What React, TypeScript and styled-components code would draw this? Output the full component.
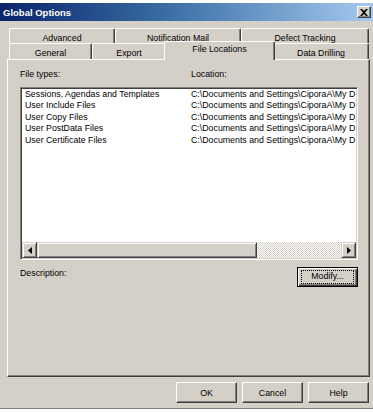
import styled, { createGlobalStyle } from 'styled-components'

const GlobalStyle = createGlobalStyle`
  body {
    margin: 0;
    background: #ffffff;
    font-family: "Liberation Sans", Arial, sans-serif;
    font-size: 8.8px;
    color: #000;
  }
`

const FACE = '#d4d0c8'
const SHADOW = '#808080'
const DARK = '#404040'

const Window = styled.div`
  width: 373px;
  height: 406px;
  margin-top: 3px;
  background: ${FACE};
  border-bottom: 1px solid ${SHADOW};
  box-sizing: border-box;
  display: flex;
  flex-direction: column;
`

const TitleBar = styled.div`
  height: 18px;
  display: flex;
  align-items: center;
  justify-content: space-between;
  padding: 0 2px 0 3px;
  background: linear-gradient(to right, #0a246a 0%, #3a6ea5 45%, #a6caf0 100%);
`

const TitleText = styled.span`
  color: #fff;
  font-weight: bold;
  font-size: 9.5px;
`

const CloseButton = styled.div`
  width: 14px;
  height: 12px;
  box-sizing: border-box;
  background: ${FACE};
  border: 1px solid;
  border-color: #fff ${DARK} ${DARK} #fff;
  box-shadow: inset -1px -1px 0 ${SHADOW};
  display: flex;
  align-items: center;
  justify-content: center;
`

const Body = styled.div`
  flex: 1;
  display: flex;
  flex-direction: column;
  padding: 7px 3px 0 7px;
`

const TabStrip = styled.div`
  display: flex;
  flex-direction: column;
  margin-left: 2px;
  width: 360px;
`

const TabRow = styled.div<{ $h: number }>`
  display: flex;
  height: ${(p) => p.$h}px;
  position: relative;
`

const Tab = styled.div<{ $w: number; $active?: boolean }>`
  width: ${(p) => p.$w}px;
  box-sizing: border-box;
  border-top: 1px solid #fff;
  border-left: 1px solid #fff;
  border-right: 1px solid ${DARK};
  border-radius: 2px 2px 0 0;
  box-shadow: inset -1px 0 0 ${SHADOW};
  background: ${FACE};
  display: flex;
  justify-content: center;
  padding-top: 4px;
  line-height: 10px;
  ${(p) =>
    p.$active &&
    `
    margin: -2px -2px -1px -2px;
    width: ${p.$w + 4}px;
    z-index: 2;
    padding-top: 2px;
  `}
`

const Panel = styled.div`
  height: 318px;
  box-sizing: border-box;
  border: 1px solid;
  border-color: #fff ${DARK} ${DARK} #fff;
  box-shadow: inset -1px -1px 0 ${SHADOW};
  padding: 9px 11px 0 12px;
  display: flex;
  flex-direction: column;
`

const LabelRow = styled.div`
  display: grid;
  grid-template-columns: 171px 1fr;
  height: 11px;
  line-height: 11px;
`

const ListBox = styled.div`
  margin-top: 7px;
  height: 173px;
  box-sizing: border-box;
  background: #fff;
  border: 1px solid;
  border-color: ${SHADOW} #fff #fff ${SHADOW};
  box-shadow: inset 1px 1px 0 ${DARK}, inset -1px -1px 0 ${FACE};
  padding: 1px;
  display: flex;
  flex-direction: column;
  width: 338px;
`

const ListRows = styled.div`
  flex: 1;
  padding-top: 0;
`

const ListRow = styled.div`
  display: grid;
  grid-template-columns: 166px 1fr;
  height: 11.4px;
  line-height: 11.4px;
  padding-left: 3px;
  white-space: nowrap;
`

const ScrollBar = styled.div`
  height: 16px;
  display: flex;
`

const ScrollArrow = styled.div`
  width: 15px;
  height: 16px;
  box-sizing: border-box;
  background: ${FACE};
  border: 1px solid;
  border-color: ${FACE} ${DARK} ${DARK} ${FACE};
  box-shadow: inset 1px 1px 0 #fff, inset -1px -1px 0 ${SHADOW};
  display: flex;
  align-items: center;
  justify-content: center;
`

const Thumb = styled.div<{ $w: number }>`
  width: ${(p) => p.$w}px;
  height: 16px;
  box-sizing: border-box;
  background: ${FACE};
  border: 1px solid;
  border-color: ${FACE} ${DARK} ${DARK} ${FACE};
  box-shadow: inset 1px 1px 0 #fff, inset -1px -1px 0 ${SHADOW};
`

const Track = styled.div`
  flex: 1;
  background-color: #fff;
  background-image: linear-gradient(45deg, ${FACE} 25%, transparent 25%, transparent 75%, ${FACE} 75%),
    linear-gradient(45deg, ${FACE} 25%, transparent 25%, transparent 75%, ${FACE} 75%);
  background-size: 2px 2px;
  background-position: 0 0, 1px 1px;
`

const DescRow = styled.div`
  margin-top: 7px;
  width: 338px;
  display: flex;
  justify-content: space-between;
  align-items: flex-start;
`

const DescLabel = styled.span`
  margin-top: 1px;
  line-height: 11px;
`

const Button = styled.button<{ $default?: boolean; $w?: number }>`
  width: ${(p) => p.$w ?? 61}px;
  height: ${(p) => (p.$default ? 20 : 21)}px;
  box-sizing: border-box;
  background: ${FACE};
  font-family: "Liberation Sans", Arial, sans-serif;
  font-size: 8.8px;
  color: #000;
  padding: 0;
  border: 1px solid;
  border-color: #fff ${DARK} ${DARK} #fff;
  box-shadow: inset -1px -1px 0 ${SHADOW};
  display: flex;
  align-items: center;
  justify-content: center;
  ${(p) =>
    p.$default &&
    `
    border: 1px solid #000;
    box-shadow: inset 1px 1px 0 #fff, inset -1px -1px 0 ${DARK}, inset -2px -2px 0 ${SHADOW};
  `}
`

const FocusRect = styled.span`
  flex: 1;
  margin: 0 3px;
  height: 12px;
  line-height: 11px;
  border: 1px dotted #000;
  text-align: center;
`

const Footer = styled.div`
  display: flex;
  justify-content: flex-end;
  gap: 5px;
  padding-top: 5px;
  padding-right: 1px;
`

const Arrow = ({ dir }: { dir: 'left' | 'right' }) => (
  <svg width="4" height="7" viewBox="0 0 4 7">
    <path d={dir === 'left' ? 'M4 0 L0 3.5 L4 7 Z' : 'M0 0 L4 3.5 L0 7 Z'} fill="#000" />
  </svg>
)

const rows = [
  'Sessions, Agendas and Templates',
  'User Include Files',
  'User Copy Files',
  'User PostData Files',
  'User Certificate Files',
]

const topTabs = [
  { label: 'Advanced', w: 106 },
  { label: 'Notification Mail', w: 126 },
  { label: 'Defect Tracking', w: 128 },
]

const bottomTabs = [
  { label: 'General', w: 83 },
  { label: 'Export', w: 74 },
  { label: 'File Locations', w: 107, active: true },
  { label: 'Data Drilling', w: 96 },
]

export default function App() {
  return (
    <>
      <GlobalStyle />
      <Window>
        <TitleBar>
          <TitleText>Global Options</TitleText>
          <CloseButton>
            <svg width="8" height="7" viewBox="0 0 8 7">
              <path d="M0 0 L2 0 L4 2 L6 0 L8 0 L5 3.5 L8 7 L6 7 L4 5 L2 7 L0 7 L3 3.5 Z" fill="#000" />
            </svg>
          </CloseButton>
        </TitleBar>
        <Body>
          <TabStrip>
            <TabRow $h={15}>
              {topTabs.map((t) => (
                <Tab key={t.label} $w={t.w}>
                  {t.label}
                </Tab>
              ))}
            </TabRow>
            <TabRow $h={16}>
              {bottomTabs.map((t) => (
                <Tab key={t.label} $w={t.w} $active={t.active}>
                  {t.label}
                </Tab>
              ))}
            </TabRow>
          </TabStrip>
          <Panel>
            <LabelRow>
              <span>File types:</span>
              <span>Location:</span>
            </LabelRow>
            <ListBox>
              <ListRows>
                {rows.map((r) => (
                  <ListRow key={r}>
                    <span>{r}</span>
                    <span>C:\Documents and Settings\CiporaA\My D</span>
                  </ListRow>
                ))}
              </ListRows>
              <ScrollBar>
                <ScrollArrow>
                  <Arrow dir="left" />
                </ScrollArrow>
                <Thumb $w={220} />
                <Track />
                <ScrollArrow>
                  <Arrow dir="right" />
                </ScrollArrow>
              </ScrollBar>
            </ListBox>
            <DescRow>
              <DescLabel>Description:</DescLabel>
              <Button $default>
                <FocusRect>Modify...</FocusRect>
              </Button>
            </DescRow>
          </Panel>
          <Footer>
            <Button>OK</Button>
            <Button>Cancel</Button>
            <Button>Help</Button>
          </Footer>
        </Body>
      </Window>
    </>
  )
}
